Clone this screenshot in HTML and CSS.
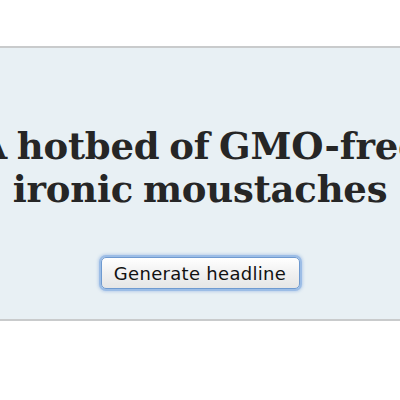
FILE: index.html
```html
<!DOCTYPE html>
<html lang="en">
<head>
    <meta charset="UTF-8">
    <meta name="viewport" content="width=device-width, initial-scale=1.0">
    <title>Headline Generator</title>
    <link rel="stylesheet" href="styles.css">
</head>
<body>
    <div class="stage">
        <h1 class="headline" id="headline">A hotbed of GMO-free ironic moustaches</h1>
        <button class="gen-btn" type="button">Generate headline</button>
    </div>
</body>
</html>
```

FILE: styles.css
```css
* {
    margin: 0;
    padding: 0;
    box-sizing: border-box;
}

html, body {
    background: #fff;
    overflow: hidden;
}

body {
    padding-top: 46px;
}

.stage {
    background-color: #e8f0f4;
    border-top: 2px solid #c9cbcc;
    border-bottom: 2px solid #c9cbcc;
    height: 275px;
    display: flex;
    flex-direction: column;
    align-items: center;
    padding-top: 77px;
}

.headline {
    width: 490px;
    flex: none;
    font-family: "DejaVu Serif", serif;
    font-weight: bold;
    font-size: 37px;
    line-height: 43px;
    color: #262626;
    text-align: center;
    letter-spacing: -0.2px;
    word-spacing: -3px;
}

.gen-btn {
    margin-top: 46px;
    width: 199px;
    height: 32px;
    font-family: "DejaVu Sans", sans-serif;
    font-size: 18px;
    letter-spacing: 0.3px;
    color: #111;
    background: linear-gradient(#ffffff, #f1f1f1 50%, #e6e6e6);
    border: 1px solid #6f9ad0;
    border-radius: 5px;
    box-shadow: 0 0 0 2px #9cbde6, 0 0 3px 3px rgba(120, 160, 220, 0.4);
}
```
